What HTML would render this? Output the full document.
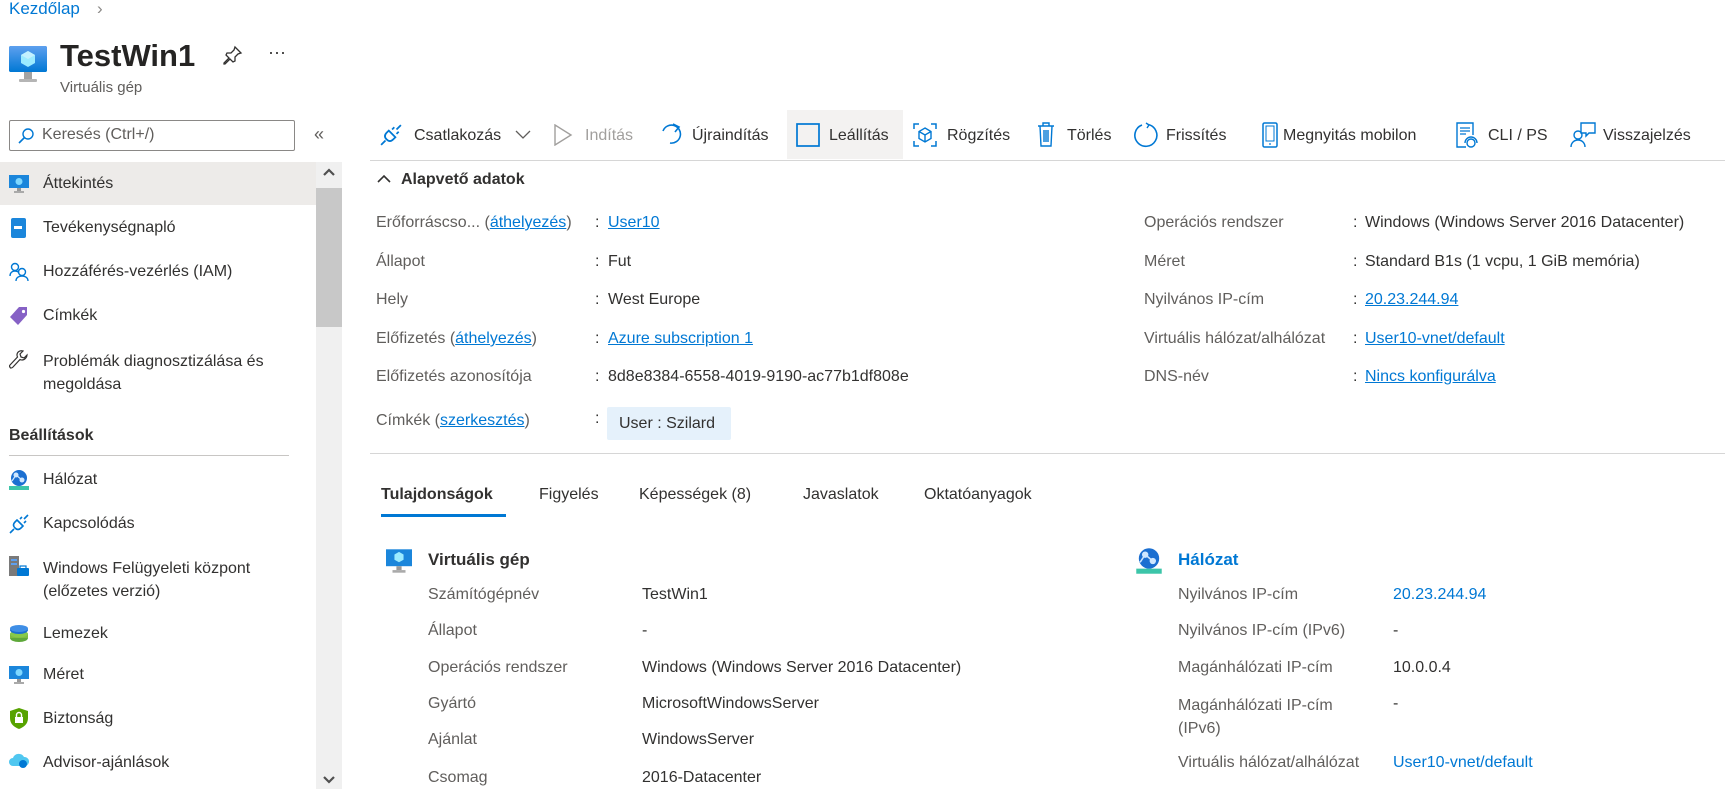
<!DOCTYPE html>
<html><head><meta charset="utf-8"><style>
*{margin:0;padding:0;box-sizing:border-box}
body{width:1725px;height:789px;overflow:hidden;background:#fff;font-family:"Liberation Sans",sans-serif;font-size:16px;color:#323130;position:relative}
.a{position:absolute;line-height:20px;white-space:nowrap}
.l{color:#605e5c}
.lk{color:#0078d4;text-decoration:underline}
.b{color:#0078d4}
svg{position:absolute}
</style></head><body>
<!-- header -->
<div class="a b" style="left:9px;top:-1px;font-size:17px">Kezdőlap</div>
<div class="a" style="left:97px;top:-1px;color:#8a8886;font-size:17px">›</div>
<svg style="left:9px;top:44px" width="38" height="40" viewBox="0 0 38 40"><rect x="0" y="2" width="38" height="26" rx="2" fill="#1883d7"/><rect x="0" y="2" width="38" height="26" rx="2" fill="url(#g)"/><defs><linearGradient id="g" x1="0" y1="0" x2="0" y2="1"><stop offset="0" stop-color="#5ea0ef"/><stop offset="1" stop-color="#0078d4"/></linearGradient></defs><path d="M19 7l7 4v8l-7 4-7-4v-8z" fill="#9cebff"/><path d="M19 7l7 4-7 4-7-4z" fill="#c3f1ff"/><rect x="15" y="28" width="8" height="7" fill="#a3a3a3"/><rect x="10" y="35" width="18" height="3" rx="1" fill="#b5b5b5"/></svg>
<div class="a" style="left:60px;top:39px;font-size:31px;line-height:34px;font-weight:bold;color:#252423">TestWin1</div>
<svg style="left:223px;top:45px" width="20" height="20" viewBox="0 0 20 20"><path d="M12 2l6 6-3 1-3 3 0 4-2 1-3-3-5 5-1 0 0-1 5-5-3-3 1-2 4 0 3-3z" fill="none" stroke="#323130" stroke-width="1.3"/></svg>
<div class="a" style="left:268px;top:42px;font-size:18px">···</div>
<div class="a l" style="left:60px;top:78px;font-size:15px">Virtuális gép</div>
<!-- search -->
<div style="position:absolute;left:9px;top:120px;width:286px;height:31px;border:1px solid #8a8886;border-radius:2px"></div>
<svg style="left:17px;top:127px" width="18" height="18" viewBox="0 0 18 18"><circle cx="11" cy="7" r="5" fill="none" stroke="#0078d4" stroke-width="1.4"/><path d="M7.5 10.5L2 16" stroke="#0078d4" stroke-width="1.6"/></svg>
<div class="a" style="left:42px;top:125px;color:#605e5c">Keresés (Ctrl+/)</div>
<div class="a" style="left:314px;top:124px;color:#605e5c;font-size:18px">«</div>
<!-- sidebar -->
<div style="position:absolute;left:0;top:162px;width:316px;height:43px;background:#edebe9"></div>
<div style="position:absolute;left:316px;top:162px;width:26px;height:627px;background:#f0f0f0"></div>
<div style="position:absolute;left:316px;top:188px;width:26px;height:139px;background:#c8c8c8"></div>
<svg style="left:322px;top:166px" width="14" height="12" viewBox="0 0 14 12"><path d="M2 9l5-5 5 5" fill="none" stroke="#505050" stroke-width="2.2"/></svg>
<svg style="left:322px;top:774px" width="14" height="12" viewBox="0 0 14 12"><path d="M2 3l5 5 5-5" fill="none" stroke="#505050" stroke-width="2.2"/></svg>

<svg style="left:9px;top:174px" width="20" height="20" viewBox="0 0 20 20"><rect y="1" width="20" height="13" fill="#1b86db"/><circle cx="10" cy="7.5" r="3.5" fill="#7fd8ff"/><rect x="8" y="14" width="4" height="3" fill="#999"/><rect x="5" y="17" width="10" height="2" fill="#aaa"/></svg>
<div class="a" style="left:43px;top:174px">Áttekintés</div>
<svg style="left:10px;top:218px" width="18" height="20" viewBox="0 0 18 20"><rect x="1" y="0" width="15" height="20" rx="2" fill="#1b86db"/><rect x="4" y="8" width="8" height="3" fill="#fff"/></svg>
<div class="a" style="left:43px;top:218px">Tevékenységnapló</div>
<svg style="left:9px;top:262px" width="20" height="20" viewBox="0 0 20 20"><circle cx="6" cy="5" r="3.5" fill="none" stroke="#0078d4" stroke-width="1.4"/><path d="M1 14c0-4 3-5 5-5s3 .5 4 1.5" fill="none" stroke="#0078d4" stroke-width="1.4"/><circle cx="13" cy="10" r="3.5" fill="none" stroke="#0078d4" stroke-width="1.4"/><path d="M7 19c0-3.5 3-5 6-5s6 1.5 6 5" fill="none" stroke="#0078d4" stroke-width="1.4"/></svg>
<div class="a" style="left:43px;top:262px">Hozzáférés-vezérlés (IAM)</div>
<svg style="left:9px;top:306px" width="20" height="20" viewBox="0 0 20 20"><path d="M10 1h8v8l-9 10-8-8z" fill="#8661c5"/><circle cx="14.5" cy="5.5" r="1.6" fill="#fff"/></svg>
<div class="a" style="left:43px;top:306px">Címkék</div>
<svg style="left:9px;top:350px" width="20" height="20" viewBox="0 0 20 20"><path d="M18 5l-3 3-3-1-1-3 3-3c-3-1-6 1-6 4 0 1 .5 2 .5 2L1 15c-1 1 0 3 1 3s1 0 2-1l7-7.5s1 .5 2 .5c3 0 5-3 5-5z" fill="none" stroke="#323130" stroke-width="1.2"/></svg>
<div class="a" style="left:43px;top:350px;line-height:23px">Problémák diagnosztizálása és<br>megoldása</div>
<div class="a" style="left:9px;top:426px;font-weight:bold;color:#323130">Beállítások</div>
<div style="position:absolute;left:9px;top:455px;width:280px;height:1px;background:#c8c6c4"></div>
<svg style="left:8px;top:469px" width="22" height="22" viewBox="0 0 22 22"><rect x="1" y="17" width="20" height="4" fill="#3cc5a9"/><circle cx="11" cy="9" r="8" fill="#1b6fd1"/><circle cx="8" cy="6" r="2.5" fill="#cfe7ff"/><circle cx="14" cy="11" r="2.5" fill="#cfe7ff"/><path d="M8 6l6 5M4 12l4-6" stroke="#cfe7ff" stroke-width="1.2"/></svg>
<div class="a" style="left:43px;top:470px">Hálózat</div>
<svg style="left:9px;top:514px" width="20" height="20" viewBox="0 0 20 20"><path d="M1 19l4-4M15 5l4-4M8 6l6 6M6 8c-2 2-2 4 0 6s4 2 6 0l2-2-6-6zM11 5l2-2M15 9l2-2" fill="none" stroke="#0078d4" stroke-width="1.6"/></svg>
<div class="a" style="left:43px;top:514px">Kapcsolódás</div>
<svg style="left:9px;top:556px" width="20" height="22" viewBox="0 0 20 22"><rect x="0" y="0" width="10" height="20" fill="#7a7a7a"/><rect x="2" y="3" width="6" height="2" fill="#5ea0ef"/><rect x="2" y="7" width="6" height="2" fill="#5ea0ef"/><rect x="8" y="12" width="12" height="8" rx="1" fill="#0078d4"/><rect x="11" y="10" width="6" height="3" fill="none" stroke="#0078d4" stroke-width="1.2"/></svg>
<div class="a" style="left:43px;top:557px;line-height:23px">Windows Felügyeleti központ<br>(előzetes verzió)</div>
<svg style="left:9px;top:624px" width="20" height="20" viewBox="0 0 20 20"><ellipse cx="10" cy="14" rx="9" ry="4" fill="#5ea83a"/><rect x="1" y="10" width="18" height="4" fill="#7fba42"/><ellipse cx="10" cy="10" rx="9" ry="3.5" fill="#86c94a"/><ellipse cx="10" cy="6" rx="9" ry="4" fill="#1b6fd1"/><ellipse cx="10" cy="4.5" rx="9" ry="3.5" fill="#3f8ee6"/></svg>
<div class="a" style="left:43px;top:624px">Lemezek</div>
<svg style="left:9px;top:665px" width="20" height="20" viewBox="0 0 20 20"><rect y="1" width="20" height="13" fill="#1b86db"/><circle cx="10" cy="7.5" r="3.5" fill="#7fd8ff"/><rect x="8" y="14" width="4" height="3" fill="#999"/><rect x="5" y="17" width="10" height="2" fill="#aaa"/></svg>
<div class="a" style="left:43px;top:665px">Méret</div>
<svg style="left:10px;top:708px" width="18" height="21" viewBox="0 0 18 21"><path d="M9 0l9 3v7c0 6-4 9-9 11C4 19 0 16 0 10V3z" fill="#57a300"/><rect x="5" y="9" width="8" height="6" fill="#fff"/><path d="M6.5 9V7a2.5 2.5 0 015 0v2" fill="none" stroke="#fff" stroke-width="1.4"/></svg>
<div class="a" style="left:43px;top:709px">Biztonság</div>
<svg style="left:8px;top:751px" width="22" height="20" viewBox="0 0 22 20"><path d="M5 15a4 4 0 010-8 6 6 0 0111-1 4.5 4.5 0 011 9z" fill="#50c7f0"/><circle cx="15" cy="13" r="4" fill="#0078d4"/></svg>
<div class="a" style="left:43px;top:753px">Advisor-ajánlások</div>

<!-- toolbar -->
<div style="position:absolute;left:787px;top:110px;width:116px;height:49px;background:#f3f2f1"></div>
<div style="position:absolute;left:370px;top:160px;width:1355px;height:1px;background:#d6d6d6"></div>
<svg style="left:380px;top:124px" width="22" height="22" viewBox="0 0 20 20"><path d="M1 19l4-4M15 5l4-4M8 6l6 6M6 8c-2 2-2 4 0 6s4 2 6 0l2-2-6-6zM11 5l2-2M15 9l2-2" fill="none" stroke="#0078d4" stroke-width="1.6"/></svg>
<div class="a" style="left:414px;top:126px">Csatlakozás</div>
<svg style="left:515px;top:130px" width="16" height="10" viewBox="0 0 16 10"><path d="M1 1l7 7 7-7" fill="none" stroke="#605e5c" stroke-width="1.3"/></svg>
<svg style="left:553px;top:124px" width="20" height="22" viewBox="0 0 20 22"><path d="M2 1l16 10L2 21z" fill="none" stroke="#a19f9d" stroke-width="1.4"/></svg>
<div class="a" style="left:585px;top:126px;color:#a19f9d">Indítás</div>
<svg style="left:660px;top:123px" width="22" height="24" viewBox="0 0 22 24"><path d="M12 4A9 9 0 1019 16" fill="none" stroke="#0078d4" stroke-width="1.6" transform="rotate(180 11 12)"/><path d="M13 1l6 3-4 5" fill="none" stroke="#0078d4" stroke-width="1.6"/></svg>
<div class="a" style="left:692px;top:126px">Újraindítás</div>
<svg style="left:796px;top:123px" width="24" height="24" viewBox="0 0 24 24"><rect x="1" y="1" width="22" height="22" fill="none" stroke="#0078d4" stroke-width="1.7"/></svg>
<div class="a" style="left:829px;top:126px">Leállítás</div>
<svg style="left:913px;top:123px" width="24" height="24" viewBox="0 0 24 24"><path d="M1 6V1h5M18 1h5v5M23 18v5h-5M6 23H1v-5" fill="none" stroke="#0078d4" stroke-width="1.5"/><path d="M12 5l6 3.5v7L12 19l-6-3.5v-7zM6 8.5l6 3.5 6-3.5M12 12v7" fill="none" stroke="#0078d4" stroke-width="1.4"/></svg>
<div class="a" style="left:947px;top:126px">Rögzítés</div>
<svg style="left:1037px;top:122px" width="18" height="25" viewBox="0 0 18 25"><path d="M1 4h16M6 4V1h6v3M3 4l1 20h10l1-20M7 8v12M9 8v12M11 8v12" fill="none" stroke="#0078d4" stroke-width="1.4"/></svg>
<div class="a" style="left:1067px;top:126px">Törlés</div>
<svg style="left:1133px;top:122px" width="26" height="26" viewBox="0 0 26 26"><path d="M15 2.5A11 11 0 1 1 9 3" fill="none" stroke="#0078d4" stroke-width="1.6"/><path d="M13 1l3 2-2 3" fill="none" stroke="#0078d4" stroke-width="1.4"/></svg>
<div class="a" style="left:1166px;top:126px">Frissítés</div>
<svg style="left:1262px;top:122px" width="16" height="26" viewBox="0 0 16 26"><rect x="1" y="1" width="14" height="24" rx="1.5" fill="none" stroke="#0078d4" stroke-width="1.5"/><rect x="4" y="4" width="8" height="15" fill="none" stroke="#0078d4" stroke-width="1"/><path d="M7 22h2" stroke="#0078d4" stroke-width="1.2"/></svg>
<div class="a" style="left:1283px;top:126px">Megnyitás mobilon</div>
<svg style="left:1456px;top:122px" width="22" height="26" viewBox="0 0 22 26"><path d="M10 25H1V1h16v12" fill="none" stroke="#0078d4" stroke-width="1.4"/><path d="M4 6h10M4 9h10M4 12h6" stroke="#0078d4" stroke-width="1.2"/><circle cx="15" cy="21" r="4" fill="none" stroke="#0078d4" stroke-width="1.4"/><path d="M9 21a6 6 0 0112 0" fill="none" stroke="#0078d4" stroke-width="1.4"/></svg>
<div class="a" style="left:1488px;top:126px">CLI / PS</div>
<svg style="left:1570px;top:122px" width="26" height="26" viewBox="0 0 26 26"><circle cx="8" cy="13" r="4" fill="none" stroke="#0078d4" stroke-width="1.4"/><path d="M1 25c0-4 3-7 7-7s7 3 7 7" fill="none" stroke="#0078d4" stroke-width="1.4"/><path d="M11 1h14v10h-6l-3 3v-3h-5z" fill="none" stroke="#0078d4" stroke-width="1.4"/></svg>
<div class="a" style="left:1603px;top:126px">Visszajelzés</div>

<!-- essentials -->
<svg style="left:376px;top:173px" width="16" height="12" viewBox="0 0 16 12"><path d="M2 9l6-6 6 6" fill="none" stroke="#323130" stroke-width="1.6"/></svg>
<div class="a" style="left:401px;top:170px;font-weight:bold">Alapvető adatok</div>

<div class="a l" style="left:376px;top:213px">Erőforráscso... (<span class="lk">áthelyezés</span>)</div>
<div class="a" style="left:595px;top:213px">:</div><div class="a lk" style="left:608px;top:213px">User10</div>
<div class="a l" style="left:376px;top:252px">Állapot</div>
<div class="a" style="left:595px;top:252px">:</div><div class="a" style="left:608px;top:252px">Fut</div>
<div class="a l" style="left:376px;top:290px">Hely</div>
<div class="a" style="left:595px;top:290px">:</div><div class="a" style="left:608px;top:290px">West Europe</div>
<div class="a l" style="left:376px;top:329px">Előfizetés (<span class="lk">áthelyezés</span>)</div>
<div class="a" style="left:595px;top:329px">:</div><div class="a lk" style="left:608px;top:329px">Azure subscription 1</div>
<div class="a l" style="left:376px;top:367px">Előfizetés azonosítója</div>
<div class="a" style="left:595px;top:367px">:</div><div class="a" style="left:608px;top:367px">8d8e8384-6558-4019-9190-ac77b1df808e</div>
<div class="a l" style="left:376px;top:411px">Címkék (<span class="lk">szerkesztés</span>)</div>
<div class="a" style="left:595px;top:409px">:</div>
<div style="position:absolute;left:607px;top:407px;width:124px;height:33px;background:#e5f1fb;border-radius:2px"></div>
<div class="a" style="left:619px;top:414px">User : Szilard</div>

<div class="a l" style="left:1144px;top:213px">Operációs rendszer</div>
<div class="a" style="left:1353px;top:213px">:</div><div class="a" style="left:1365px;top:213px">Windows (Windows Server 2016 Datacenter)</div>
<div class="a l" style="left:1144px;top:252px">Méret</div>
<div class="a" style="left:1353px;top:252px">:</div><div class="a" style="left:1365px;top:252px">Standard B1s (1 vcpu, 1 GiB memória)</div>
<div class="a l" style="left:1144px;top:290px">Nyilvános IP-cím</div>
<div class="a" style="left:1353px;top:290px">:</div><div class="a lk" style="left:1365px;top:290px">20.23.244.94</div>
<div class="a l" style="left:1144px;top:329px">Virtuális hálózat/alhálózat</div>
<div class="a" style="left:1353px;top:329px">:</div><div class="a lk" style="left:1365px;top:329px">User10-vnet/default</div>
<div class="a l" style="left:1144px;top:367px">DNS-név</div>
<div class="a" style="left:1353px;top:367px">:</div><div class="a lk" style="left:1365px;top:367px">Nincs konfigurálva</div>

<div style="position:absolute;left:370px;top:453px;width:1355px;height:1px;background:#d6d6d6"></div>

<!-- tabs -->
<div class="a" style="left:381px;top:485px;font-weight:bold">Tulajdonságok</div>
<div style="position:absolute;left:381px;top:514px;width:125px;height:3px;background:#0078d4"></div>
<div class="a" style="left:539px;top:485px">Figyelés</div>
<div class="a" style="left:639px;top:485px">Képességek (8)</div>
<div class="a" style="left:803px;top:485px">Javaslatok</div>
<div class="a" style="left:924px;top:485px">Oktatóanyagok</div>

<!-- VM section -->
<svg style="left:386px;top:548px" width="26" height="26" viewBox="0 0 20 20"><rect y="1" width="20" height="13" fill="#1b86db"/><path d="M10 3l3.5 2v4L10 11 6.5 9V5z" fill="#9cebff"/><rect x="8" y="14" width="4" height="3" fill="#999"/><rect x="5" y="17" width="10" height="2" fill="#aaa"/></svg>
<div class="a" style="left:428px;top:550px;font-weight:bold;font-size:17px">Virtuális gép</div>
<div class="a l" style="left:428px;top:585px">Számítógépnév</div><div class="a" style="left:642px;top:585px">TestWin1</div>
<div class="a l" style="left:428px;top:621px">Állapot</div><div class="a" style="left:642px;top:621px">-</div>
<div class="a l" style="left:428px;top:658px">Operációs rendszer</div><div class="a" style="left:642px;top:658px">Windows (Windows Server 2016 Datacenter)</div>
<div class="a l" style="left:428px;top:694px">Gyártó</div><div class="a" style="left:642px;top:694px">MicrosoftWindowsServer</div>
<div class="a l" style="left:428px;top:730px">Ajánlat</div><div class="a" style="left:642px;top:730px">WindowsServer</div>
<div class="a l" style="left:428px;top:768px">Csomag</div><div class="a" style="left:642px;top:768px">2016-Datacenter</div>

<!-- network section -->
<svg style="left:1135px;top:546px" width="28" height="30" viewBox="0 0 22 22"><rect x="1" y="17" width="20" height="4" fill="#3cc5a9"/><circle cx="11" cy="9" r="8" fill="#1b6fd1"/><circle cx="8" cy="6" r="2.5" fill="#cfe7ff"/><circle cx="14" cy="11" r="2.5" fill="#cfe7ff"/><path d="M8 6l6 5M4 12l4-6" stroke="#cfe7ff" stroke-width="1.2"/></svg>
<div class="a" style="left:1178px;top:550px;font-weight:bold;font-size:17px;color:#0078d4">Hálózat</div>
<div class="a l" style="left:1178px;top:585px">Nyilvános IP-cím</div><div class="a b" style="left:1393px;top:585px">20.23.244.94</div>
<div class="a l" style="left:1178px;top:621px">Nyilvános IP-cím (IPv6)</div><div class="a" style="left:1393px;top:621px">-</div>
<div class="a l" style="left:1178px;top:658px">Magánhálózati IP-cím</div><div class="a" style="left:1393px;top:658px">10.0.0.4</div>
<div class="a l" style="left:1178px;top:694px;line-height:23px">Magánhálózati IP-cím<br>(IPv6)</div><div class="a" style="left:1393px;top:694px">-</div>
<div class="a l" style="left:1178px;top:753px">Virtuális hálózat/alhálózat</div><div class="a b" style="left:1393px;top:753px">User10-vnet/default</div>
</body></html>
